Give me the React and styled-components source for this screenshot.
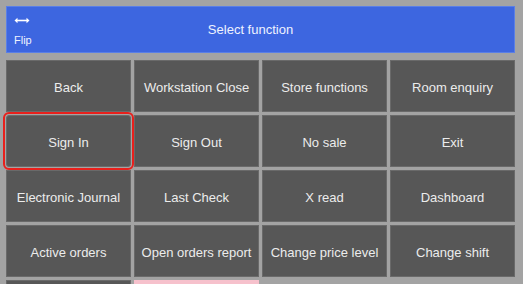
import React from "react"
import styled, { createGlobalStyle } from "styled-components"

const GlobalStyle = createGlobalStyle`
  html, body {
    margin: 0;
    background: #a3a3a3;
    font-family: "Liberation Sans", Arial, sans-serif;
  }
`

const Page = styled.div`
  padding: 6px 8px 0 6px;
  height: 284px;
  box-sizing: border-box;
  overflow: hidden;
`

const Header = styled.div`
  display: flex;
  align-items: stretch;
  height: 47px;
  background: #3d66e0;
  border: 1px solid #5a7fe6;
  box-sizing: border-box;
  margin-bottom: 7px;
  color: #eef2ff;
`

const FlipButton = styled.div`
  width: 40px;
  display: flex;
  flex-direction: column;
  justify-content: flex-start;
  padding: 10px 0 0 7px;
  box-sizing: border-box;
  font-size: 11px;
  gap: 10px;
`

const Title = styled.div`
  flex: 1;
  display: flex;
  align-items: center;
  justify-content: center;
  font-size: 13px;
  padding-bottom: 1px;
`

const Spacer = styled.div`
  width: 60px;
`

const Grid = styled.div`
  display: grid;
  grid-template-columns: repeat(4, 125px);
  grid-auto-rows: 52px;
  gap: 3px;
`

const Tile = styled.div`
  display: flex;
  align-items: center;
  justify-content: center;
  padding-top: 2px;
  background: ${p => (p.$pink ? "#f6c1cc" : "#575757")};
  color: #ececec;
  font-size: 13px;
  border: 1px solid ${p => (p.$pink ? "#f6c1cc" : "#6a6a6a")};
  box-sizing: border-box;
  border-radius: ${p => (p.$selected ? "3px" : "0")};
  outline: ${p => (p.$selected ? "2px solid #e8201c" : "none")};
  outline-offset: 1px;
`

const FlipIcon = () => (
  <svg width="16" height="7" viewBox="0 0 16 7">
    <path d="M2 3.5 H14" stroke="#fff" strokeWidth="1.6" />
    <path d="M0.5 3.5 L3.5 0.8 V6.2 Z" fill="#fff" />
    <path d="M15.5 3.5 L12.5 0.8 V6.2 Z" fill="#fff" />
  </svg>
)

const functions = [
  "Back",
  "Workstation Close",
  "Store functions",
  "Room enquiry",
  "Sign In",
  "Sign Out",
  "No sale",
  "Exit",
  "Electronic Journal",
  "Last Check",
  "X read",
  "Dashboard",
  "Active orders",
  "Open orders report",
  "Change price level",
  "Change shift",
]

const App = () => (
  <>
    <GlobalStyle />
    <Page>
      <Header>
        <FlipButton>
          <FlipIcon />
          <span>Flip</span>
        </FlipButton>
        <Title>Select function</Title>
        <Spacer />
      </Header>
      <Grid>
        {functions.map(name => (
          <Tile key={name} $selected={name === "Sign In"}>
            {name}
          </Tile>
        ))}
        <Tile />
        <Tile $pink />
      </Grid>
    </Page>
  </>
)

export default App
